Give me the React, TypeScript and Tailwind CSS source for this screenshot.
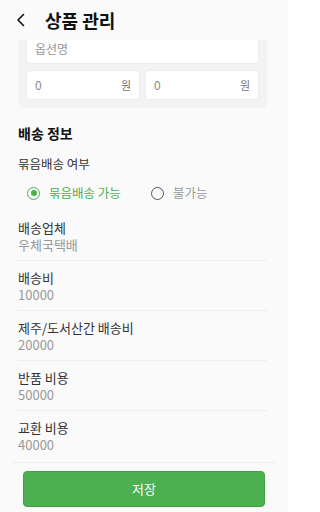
import React, { useState } from 'react';

const font = { fontFamily: '"Noto Sans CJK KR", "Noto Sans", sans-serif' };

const fields = [
  { label: '배송업체', value: '우체국택배' },
  { label: '배송비', value: '10000' },
  { label: '제주/도서산간 배송비', value: '20000' },
  { label: '반품 비용', value: '50000' },
  { label: '교환 비용', value: '40000' },
];

function Radio({ checked, label, onClick }: { checked: boolean; label: string; onClick: () => void }) {
  return (
    <button type="button" onClick={onClick} className="flex items-center gap-[9px]">
      <span
        className={`w-[13px] h-[13px] rounded-full border-[1.5px] flex items-center justify-center ${
          checked ? 'border-[#4caf50]' : 'border-[#555]'
        }`}
      >
        {checked && <span className="w-[6px] h-[6px] rounded-full bg-[#4caf50]" />}
      </span>
      <span className={`text-[12.5px] leading-5 ${checked ? 'text-[#4caf50]' : 'text-[#999]'}`}>{label}</span>
    </button>
  );
}

export default function App() {
  const [bundle, setBundle] = useState(true);

  return (
    <div className="h-[512px] w-[288px] flex flex-col bg-[#fafafa] overflow-hidden" style={font}>
      {/* 헤더 */}
      <header className="relative z-10 h-10 flex-shrink-0 flex items-center pl-[16px] bg-[#fafafa]">
        <svg width="10" height="14" viewBox="0 0 10 14" className="text-[#111]">
          <path d="M7.5 1.5 L2 7 L7.5 12.5" fill="none" stroke="currentColor" strokeWidth="1.6" strokeLinecap="round" strokeLinejoin="round" />
        </svg>
        <h1 className="ml-[19px] text-[18px] font-bold text-[#111] leading-6">상품 관리</h1>
      </header>

      <main className="flex-1 overflow-hidden pl-[18px] pr-[21px]">
        {/* 옵션 카드 */}
        <div className="-mt-[14px] bg-[#f3f3f3] rounded-md p-2 flex flex-col gap-[6px]">
          <div className="h-[30px] bg-white border border-[#ececec] rounded-[4px] flex items-center px-2">
            <span className="text-[12px] text-[#999]">옵션명</span>
          </div>
          <div className="flex gap-[5px]">
            {[0, 1].map(i => (
              <div key={i} className="flex-1 h-[30px] bg-white border border-[#ececec] rounded-[4px] flex items-center justify-between px-2">
                <span className="text-[12px] text-[#888]">0</span>
                <span className="text-[11px] text-[#777]">원</span>
              </div>
            ))}
          </div>
        </div>

        <h2 className="mt-[15px] text-[14px] font-bold text-[#111] leading-5">배송 정보</h2>
        <p className="mt-[13px] text-[12.5px] text-[#333] leading-4">묶음배송 여부</p>

        <div className="mt-[11px] mb-2 flex items-center pl-[9px] h-5">
          <div className="w-[124px]">
            <Radio checked={bundle} label="묶음배송 가능" onClick={() => setBundle(true)} />
          </div>
          <Radio checked={!bundle} label="불가능" onClick={() => setBundle(false)} />
        </div>

        {fields.map((f, i) => (
          <div
            key={f.label}
            className={`pt-2 pb-[7px] ${i < fields.length - 1 ? 'border-b border-[#eeeeee]' : ''}`}
          >
            <p className="text-[13px] text-[#333] leading-[17px]">{f.label}</p>
            <p className="text-[13px] text-[#999] leading-[17px]">{f.value}</p>
          </div>
        ))}
      </main>

      {/* 하단 버튼 */}
      <footer className="mx-3 border-t border-[#eeeeee] pt-[8px] pb-[5px] px-[11px] flex-shrink-0">
        <button
          type="button"
          className="w-full h-9 bg-[#4caf50] border border-[#43a047] rounded-[4px] text-white text-[13px]"
        >
          저장
        </button>
      </footer>
    </div>
  );
}
